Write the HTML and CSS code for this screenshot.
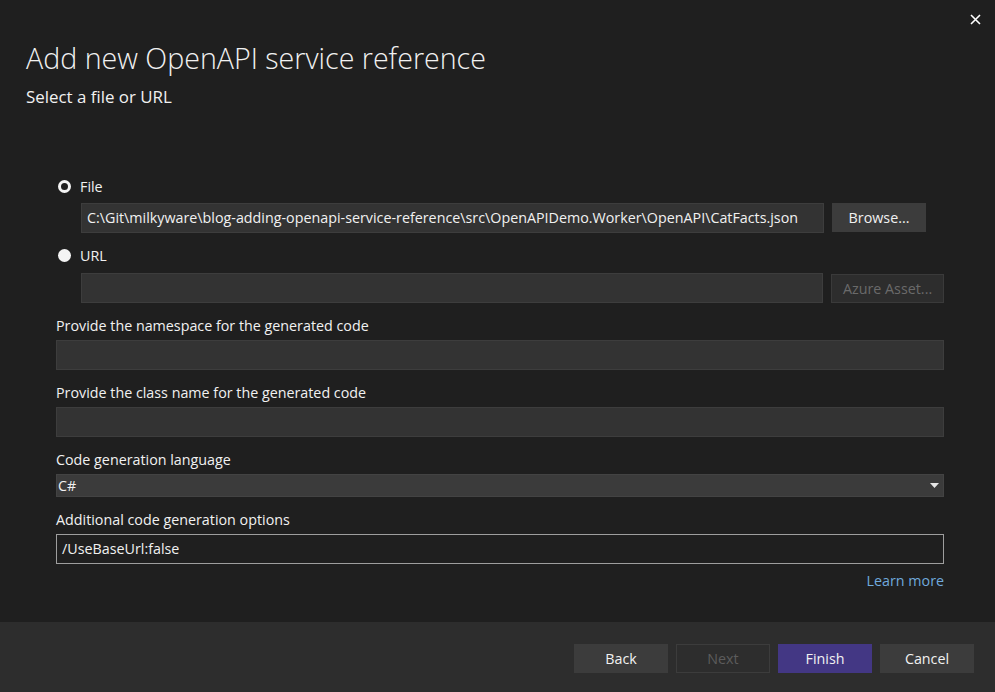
FILE: index.html
```html
<!DOCTYPE html>
<html lang="en">
<head>
<meta charset="utf-8">
<title>Add new OpenAPI service reference</title>
<link rel="stylesheet" href="styles.css">
</head>
<body>
<div class="dialog">
  <button class="close" aria-label="Close">
    <svg width="11" height="11" viewBox="0 0 11 11"><path d="M1 1L10 10M10 1L1 10" stroke="#ffffff" stroke-width="1.6" fill="none"/></svg>
  </button>
  <div class="main">
    <h1 class="title">Add new OpenAPI service reference</h1>
    <p class="subtitle">Select a file or URL</p>
    <div class="form">
      <label class="radio-row"><span class="radio checked"></span><span>File</span></label>
      <div class="input-row">
        <div class="textbox filled">C:\Git\milkyware\blog-adding-openapi-service-reference\src\OpenAPIDemo.Worker\OpenAPI\CatFacts.json</div>
        <button class="btn browse">Browse...</button>
      </div>
      <label class="radio-row url"><span class="radio"></span><span>URL</span></label>
      <div class="input-row url-input">
        <div class="textbox filled"></div>
        <button class="btn azure" disabled>Azure Asset...</button>
      </div>
      <div class="field-label">Provide the namespace for the generated code</div>
      <div class="textbox wide"></div>
      <div class="field-label">Provide the class name for the generated code</div>
      <div class="textbox wide"></div>
      <div class="field-label">Code generation language</div>
      <div class="select">
        <span>C#</span>
        <svg width="9" height="5" viewBox="0 0 9 5"><path d="M0 0H9L4.5 5Z" fill="#e6e6e6"/></svg>
      </div>
      <div class="field-label">Additional code generation options</div>
      <div class="textbox wide outlined">/UseBaseUrl:false</div>
      <div class="learn"><a href="#">Learn more</a></div>
    </div>
  </div>
  <div class="footer">
    <button class="btn fbtn">Back</button>
    <button class="btn fbtn disabled">Next</button>
    <button class="btn fbtn primary">Finish</button>
    <button class="btn fbtn">Cancel</button>
  </div>
</div>
</body>
</html>
```
FILE: styles.css
```css
* { box-sizing: border-box; }
html, body { margin: 0; padding: 0; }
body {
  background: #1f1f1f;
  color: #f1f1f1;
  font-family: "Segoe UI", "Open Sans", "Noto Sans", sans-serif;
  font-size: 14.3px;
}
.dialog {
  position: relative;
  width: 995px;
  height: 692px;
  display: flex;
  flex-direction: column;
}
.close {
  position: absolute;
  top: 14px;
  right: 14px;
  width: 11px;
  height: 11px;
  padding: 0;
  border: 0;
  background: none;
  display: flex;
}
.main {
  flex: 1;
  padding: 36px 51px 0 26px;
}
.title {
  margin: 0;
  font-weight: 300;
  font-size: 28.6px;
  line-height: 44px;
  color: #f1f1f1;
}
.subtitle {
  margin: 4px 0 0;
  font-size: 16.9px;
  line-height: 26px;
  color: #f1f1f1;
}
.form {
  padding: 66px 0 0 30px;
}
.radio-row {
  display: flex;
  align-items: center;
  gap: 9px;
  height: 20px;
  padding-left: 2px;
}
.radio {
  width: 13px;
  height: 13px;
  border-radius: 50%;
  background: #f4f4f4;
}
.radio.checked {
  background: #1f1f1f;
  border: 3px solid #f4f4f4;
}
.input-row {
  display: flex;
  gap: 8px;
  margin: 7px 0 0 25px;
  height: 30px;
}
.input-row.url-input { margin-top: 8px; }
.radio-row.url { margin-top: 12px; }
.textbox {
  height: 30px;
  background: #333333;
  border: 1px solid #3d3d3d;
  padding: 0 5px;
  line-height: 28px;
  white-space: nowrap;
  overflow: hidden;
}
.textbox.filled { width: 743px; }
.textbox.wide { width: 888px; }
.textbox.outlined {
  background: #1f1f1f;
  border-color: #9e9e9e;
}
.btn {
  font-family: inherit;
  font-size: 14.3px;
  color: #f1f1f1;
  background: #3c3c3c;
  border: 1px solid #3c3c3c;
  padding: 0;
  height: 29px;
}
.browse { width: 94px; }
.azure {
  width: 113px;
  background: #2d2d2d;
  border-color: #3a3a3a;
  color: #6a6a6a;
  margin-top: 1px;
}
.field-label {
  margin-top: 13px;
  line-height: 20px;
  height: 24px;
}
.select {
  width: 888px;
  height: 23px;
  background: #3b3b3b;
  border: 1px solid #434343;
  display: flex;
  align-items: center;
  justify-content: space-between;
  padding: 0 4px 0 1px;
}
.learn {
  text-align: right;
  width: 888px;
  margin-top: 7px;
  line-height: 20px;
}
.learn a {
  color: #70a9dc;
  text-decoration: none;
}
.footer {
  height: 70px;
  background: #2d2d2d;
  display: flex;
  justify-content: flex-end;
  gap: 8px;
  padding: 22px 21px 0 0;
}
.fbtn {
  width: 94px;
}
.fbtn.disabled {
  background: #2d2d2d;
  border-color: #3c3c3c;
  color: #5c5c5c;
}
.fbtn.primary {
  background: #433784;
  border-color: #433784;
}
```
